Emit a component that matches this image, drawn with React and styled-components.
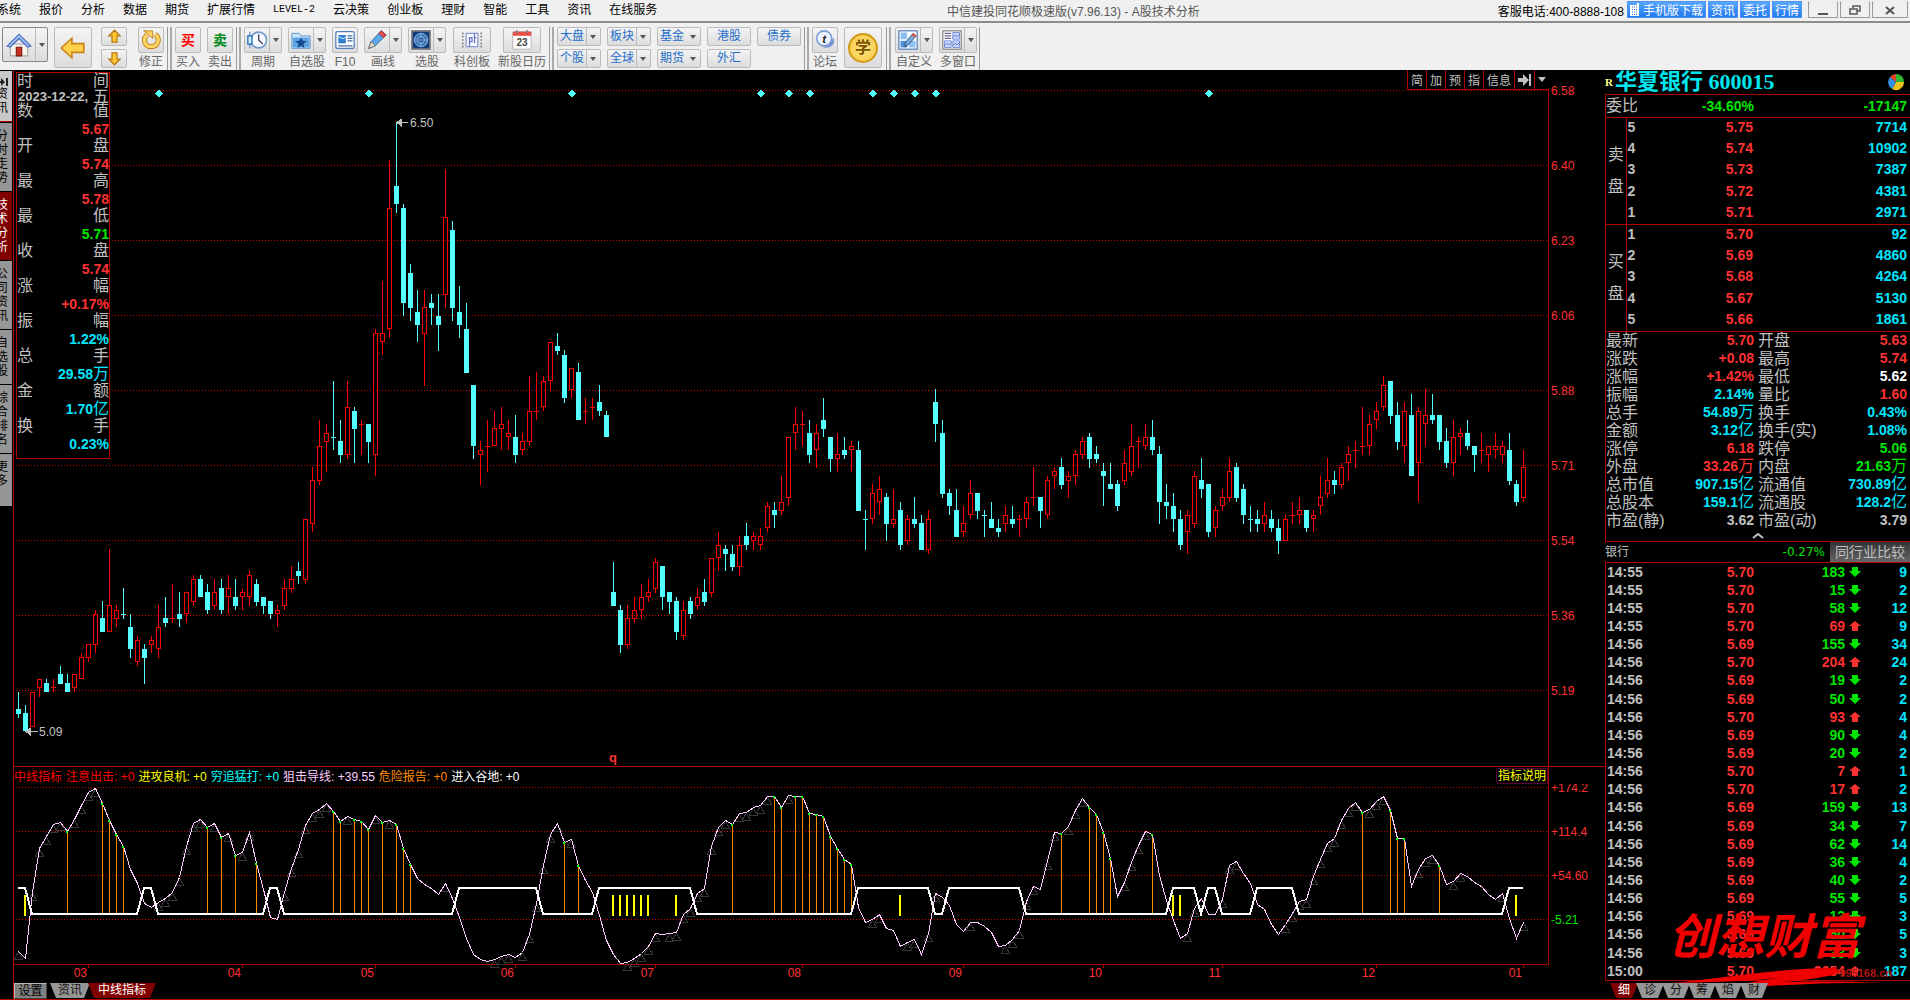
import React from 'react';
import styled, { createGlobalStyle } from 'styled-components';

const RED = '#b00000';

/* high, body top, body bottom, low (in cents), r = rising, c = falling */
const CANDLES = `
518 514 513 512 c|515 513 509 509 c|518 518 510 510 r|521 521 519 517 r|521 520 518 518 c|521 519 519 518 r|524 522 520 520 c|522 520 518 518 c|522 522 519 518 r|527 526 521 521 r
529 529 526 525 r|537 536 529 527 r|539 535 532 532 c|551 538 532 532 r|538 537 535 533 r|542 536 536 535 c|536 533 528 526 c|531 530 525 524 r|529 528 526 520 c|531 530 529 527 r
538 533 528 526 r|540 535 534 533 c|543 535 535 534 r|541 536 535 533 c|541 541 536 534 r|545 544 539 538 r|545 544 540 540 c|543 541 537 536 c|544 541 538 537 r|544 542 537 536 c
545 542 540 536 r|544 540 538 537 c|542 541 540 537 r|546 545 540 538 r|544 543 539 538 c|540 540 538 536 c|539 539 536 535 c|538 537 536 533 r|544 542 538 537 r|547 544 542 541 r
548 546 545 543 c|558 558 544 543 r|570 567 557 555 r|581 575 567 566 r|580 578 576 569 r|590 577 577 574 c|581 576 573 571 c|590 584 573 572 r|584 583 579 571 c|581 580 580 573 r
580 580 576 571 c|602 601 573 568 r|613 601 599 596 r|641 630 602 600 r|650 635 631 629 c|631 630 608 605 c|617 615 607 604 c|611 606 603 599 c|611 607 601 589 r|610 608 607 603 c
610 605 603 597 c|639 628 610 607 r|627 625 607 604 c|612 606 603 600 c|608 602 592 592 c|589 589 575 572 c|576 574 573 566 r|581 575 575 569 r|583 579 575 575 r|584 580 579 574 r
581 578 577 574 r|582 577 573 571 c|578 576 574 573 r|591 583 576 575 r|592 583 583 581 r|591 590 584 583 r|599 599 590 588 r|601 598 597 596 c|597 596 586 585 c|593 593 588 586 r
594 592 581 581 c|586 583 583 580 r|586 584 584 581 r|589 585 583 582 c|583 582 577 577 c|548 541 538 538 c|538 537 529 527 c|538 535 529 528 r|540 537 535 534 r|543 540 537 535 r
544 541 540 539 r|549 548 542 541 r|547 547 540 537 c|541 541 539 536 c|540 539 532 530 c|539 537 531 530 r|540 539 536 535 c|542 540 538 537 r|544 541 539 538 c|549 549 541 540 r
555 552 549 546 r|552 551 550 546 c|552 550 547 546 c|554 552 547 545 r|557 554 552 551 c|555 554 553 551 r|556 554 552 551 r|562 561 556 555 r|562 560 559 556 c|568 562 560 559 r
577 577 563 561 r|584 580 578 574 r|583 580 580 575 r|581 578 573 571 c|580 578 574 570 r|586 581 579 577 c|577 577 572 569 c|578 573 572 569 r|577 574 573 572 c|576 575 574 569 r
576 574 560 560 c|560 558 558 551 c|566 564 558 557 r|568 565 562 559 r|564 563 557 553 c|565 558 557 556 r|562 560 552 551 c|559 558 553 552 r|563 558 557 556 c|559 557 551 551 c
560 558 551 550 r|588 585 580 576 c|581 578 564 563 c|565 564 561 559 c|565 560 554 554 c|561 557 555 554 r|567 564 559 558 r|564 564 560 558 c|560 559 559 554 c|562 558 556 556 c
558 556 555 554 c|561 559 557 555 r|561 558 557 556 c|559 558 558 554 r|563 562 558 556 r|570 563 563 561 r|563 563 560 556 c|568 567 559 558 r|570 569 568 565 r|572 570 566 565 c
569 568 567 563 r|574 573 568 566 r|577 576 573 572 r|578 577 572 570 c|575 573 572 571 c|571 569 568 561 c|571 566 565 565 c|567 566 561 560 c|574 571 567 566 r|580 575 569 568 r
577 576 576 570 r|580 577 575 574 r|581 577 574 573 c|575 573 562 557 c|566 562 561 558 c|564 561 558 555 c|560 558 552 551 c|560 559 555 550 r|569 568 557 556 r|572 567 565 563 c
566 566 555 554 c|561 560 556 554 r|565 563 561 560 r|572 569 563 562 r|571 570 563 562 c|566 565 559 557 c|561 558 558 555 c|560 558 557 555 c|562 559 557 555 r|560 558 556 555 c
558 556 553 550 c|559 558 553 553 r|562 559 559 557 r|563 560 559 557 r|560 560 556 555 c|560 559 558 555 r|568 563 561 559 r|572 567 564 563 r|569 567 566 564 c|571 570 566 565 r
575 573 571 567 r|576 574 574 570 r|584 575 575 573 r|582 580 575 573 r|585 583 581 579 r|591 589 584 583 r|590 590 582 580 c|585 582 576 574 c|585 583 575 571 r|587 582 568 568 c
584 583 571 562 r|588 582 580 575 r|587 582 581 580 c|582 582 576 574 c|579 576 571 570 c|581 577 571 568 r|579 578 577 573 r|581 578 575 574 c|575 575 573 569 c|578 574 574 571 r
575 575 573 569 r|578 575 574 572 r|576 575 573 571 r|578 574 567 566 c|567 566 562 561 c|574 570 563 562 r`
  .trim()
  .split(/[|\n]/)
  .map((row) => {
    const [high, top, bottom, low, kind] = row.split(' ');
    return { high: +high, top: +top, bottom: +bottom, low: +low, up: kind === 'r' };
  });

const OSCILLATOR = [
  211, 218, 152, 108, 96, 84, 82, 91, 79, 65, 52, 48, 63, 80, 94, 106, 129, 143, 163, 167,
  162, 158, 152, 137, 106, 83, 79, 87, 83, 97, 93, 115, 112, 92, 123, 149, 177, 179, 152, 128,
  109, 85, 73, 69, 63, 71, 81, 76, 79, 81, 89, 75, 82, 80, 84, 108, 124, 138, 144, 148,
  154, 143, 158, 177, 198, 214, 219, 221, 219, 216, 214, 217, 212, 194, 163, 125, 94, 83, 102, 99,
  125, 140, 152, 175, 200, 214, 223, 222, 218, 213, 206, 193, 194, 193, 192, 174, 168, 153, 148, 106,
  87, 80, 84, 73, 72, 67, 65, 56, 56, 67, 55, 56, 56, 73, 74, 76, 96, 108, 119, 124,
  167, 182, 179, 174, 188, 190, 206, 202, 199, 214, 193, 153, 157, 165, 184, 191, 182, 182, 186, 192,
  206, 205, 199, 190, 161, 146, 149, 121, 92, 93, 86, 70, 58, 67, 74, 92, 118, 156, 142, 122,
  105, 91, 94, 135, 160, 180, 198, 193, 168, 158, 174, 174, 159, 125, 121, 133, 143, 164, 169, 184,
  194, 184, 173, 161, 159, 136, 119, 103, 98, 80, 68, 62, 72, 69, 61, 56, 70, 98, 98, 146,
  129, 118, 115, 125, 144, 141, 133, 136, 142, 146, 154, 159, 153, 178, 198, 182,
].map((v) => v + 740);

const HIGH_RUNS = [[0, 1], [18, 19], [36, 37], [63, 74], [83, 96], [120, 130], [133, 143], [165, 168], [170, 171], [177, 182], [213, 215]];
const SIGNALS = [1, 85, 86, 87, 88, 89, 90, 94, 126, 165, 166, 214];
const EVENTS = [20, 50, 79, 106, 110, 113, 122, 125, 128, 131, 170];
const PRICE_GRID = [['6.58', 90], ['6.40', 165], ['6.23', 240], ['6.06', 315], ['5.88', 390], ['5.71', 465], ['5.54', 540], ['5.36', 615], ['5.19', 690]];
const LEVEL_GRID = [['+174.2', 787], ['+114.4', 831], ['+54.60', 875], ['-5.21', 919]];
const MONTHS = [['03', 10], ['04', 32], ['05', 51], ['06', 71], ['07', 91], ['08', 112], ['09', 135], ['10', 155], ['11', 172], ['12', 194], ['01', 215]];

const MENU = ['系统', '报价', '分析', '数据', '期货', '扩展行情', 'LEVEL-2', '云决策', '创业板', '理财', '智能', '工具', '资讯', '在线服务'];
const SIDE_TABS = ['资讯', '分时走势', '技术分析', '公司资讯', '自选股', '综合排名', '更多'];

const CURSOR_DATA = [
  ['数值', '5.67', 'red'],
  ['开盘', '5.74', 'red'],
  ['最高', '5.78', 'red'],
  ['最低', '5.71', 'green'],
  ['收盘', '5.74', 'red'],
  ['涨幅', '+0.17%', 'red'],
  ['振幅', '1.22%', 'cyan'],
  ['总手', '29.58万', 'cyan'],
  ['金额', '1.70亿', 'cyan'],
  ['换手', '0.23%', 'cyan'],
];

const ASKS = [[5, '5.75', 7714], [4, '5.74', 10902], [3, '5.73', 7387], [2, '5.72', 4381], [1, '5.71', 2971]];
const BIDS = [[1, '5.70', 92], [2, '5.69', 4860], [3, '5.68', 4264], [4, '5.67', 5130], [5, '5.66', 1861]];

const STATS = [
  ['最新', '5.70', 'red', '开盘', '5.63', 'red'],
  ['涨跌', '+0.08', 'red', '最高', '5.74', 'red'],
  ['涨幅', '+1.42%', 'red', '最低', '5.62', 'white'],
  ['振幅', '2.14%', 'cyan', '量比', '1.60', 'red'],
  ['总手', '54.89万', 'cyan', '换手', '0.43%', 'cyan'],
  ['金额', '3.12亿', 'cyan', '换手(实)', '1.08%', 'cyan'],
  ['涨停', '6.18', 'red', '跌停', '5.06', 'green'],
  ['外盘', '33.26万', 'red', '内盘', '21.63万', 'green'],
  ['总市值', '907.15亿', 'cyan', '流通值', '730.89亿', 'cyan'],
  ['总股本', '159.1亿', 'cyan', '流通股', '128.2亿', 'cyan'],
  ['市盈(静)', '3.62', 'grey', '市盈(动)', '3.79', 'grey'],
];

const TICKS = [
  ['14:55', '5.70', 183, 'd', 9],
  ['14:55', '5.70', 15, 'd', 2],
  ['14:55', '5.70', 58, 'd', 12],
  ['14:55', '5.70', 69, 'u', 9],
  ['14:56', '5.69', 155, 'd', 34],
  ['14:56', '5.70', 204, 'u', 24],
  ['14:56', '5.69', 19, 'd', 2],
  ['14:56', '5.69', 50, 'd', 2],
  ['14:56', '5.70', 93, 'u', 4],
  ['14:56', '5.69', 90, 'd', 4],
  ['14:56', '5.69', 20, 'd', 2],
  ['14:56', '5.70', 7, 'u', 1],
  ['14:56', '5.70', 17, 'u', 2],
  ['14:56', '5.69', 159, 'd', 13],
  ['14:56', '5.69', 34, 'd', 7],
  ['14:56', '5.69', 62, 'd', 14],
  ['14:56', '5.69', 36, 'd', 4],
  ['14:56', '5.69', 40, 'd', 2],
  ['14:56', '5.69', 55, 'd', 5],
  ['14:56', '5.69', 12, 'd', 3],
  ['14:56', '5.69', 50, 'd', 5],
  ['14:56', '5.69', 33, 'd', 3],
  ['15:00', '5.70', 3054, 'u', 187],
];

const TONES = { red: '#ff3232', green: '#00e600', cyan: '#00e6ff', white: '#ffffff', grey: '#c0c0c0' };

const xOf = (i) => 18 + 7 * i;
const yOf = (p) => 122 + (650 - p) * 4.32;

const Candle = ({ data, x }) => {
  const color = data.up ? '#ff0000' : '#54ffff';
  const high = Math.floor(yOf(data.high));
  const top = Math.floor(yOf(data.top));
  const bottom = Math.max(Math.round(yOf(data.bottom)), top + 1);
  const low = Math.max(Math.round(yOf(data.low)), bottom);
  return (
    <g fill={color}>
      <rect x={x} y={high} width="1" height={top - high} />
      <rect x={x} y={bottom} width="1" height={low - bottom} />
      {data.up && bottom - top > 2 ? (
        <rect x={x - 1.5} y={top + 0.5} width="4" height={bottom - top - 1} fill="none" stroke={color} />
      ) : (
        <rect x={x - 2} y={top} width="5" height={bottom - top} />
      )}
    </g>
  );
};

const PriceChart = () => (
  <ChartSvg viewBox="14 70 1591 696" role="img" aria-label="K线">
    {PRICE_GRID.map(([label, y]) => (
      <g key={label}>
        <line x1="16" x2="1548" y1={y + 0.5} y2={y + 0.5} stroke="#c80000" strokeDasharray="1 2" />
        <text x="1551" y={y + 5} fill="#ff3232">{label}</text>
      </g>
    ))}
    <rect x="1548" y="70" width="1" height="696" fill={RED} />
    {EVENTS.map((i) => (
      <path key={i} d={`M${xOf(i) + 1} 89.500l4 4-4 4-4-4z`} fill="#54ffff" />
    ))}
    {CANDLES.map((c, i) => (
      <Candle key={i} data={c} x={xOf(i)} />
    ))}
    <path d="M397 122.500h11M397 122.500l4-3v6z" stroke="#c0c0c0" fill="#c0c0c0" />
    <text x="410" y="127" fill="#c0c0c0">6.50</text>
    <path d="M26 731.500h12M26 731.500l4-3v6z" stroke="#c0c0c0" fill="#c0c0c0" />
    <text x="39" y="736" fill="#c0c0c0">5.09</text>
    <text x="609" y="762" fill="#ff3232" fontWeight="bold" fontSize="13">q</text>
  </ChartSvg>
);

const boxPath = () => {
  const isHigh = (i) => HIGH_RUNS.some(([a, b]) => i >= a && i <= b);
  return OSCILLATOR.map((_, i) => `${i ? 'L' : 'M'}${xOf(i)} ${isHigh(i) ? 888 : 914}`).join('');
};

const IndicatorChart = () => (
  <ChartSvg viewBox="14 784 1591 197" role="img" aria-label="中线指标">
    {LEVEL_GRID.map(([label, y]) => (
      <g key={label}>
        <line x1="16" x2="1548" y1={y + 0.5} y2={y + 0.5} stroke="#c80000" strokeDasharray="1 2" />
        <text x="1551" y={y + 5} fill={label[0] === '-' ? '#00e600' : '#ff3232'}>{label}</text>
      </g>
    ))}
    <rect x="1548" y="784" width="1" height="181" fill={RED} />
    <rect x="13" y="964" width="1536" height="1" fill={RED} />
    {OSCILLATOR.map((y, i) => {
      const x = xOf(i);
      const falling = i > 0 && y >= OSCILLATOR[i - 1];
      if (!falling) return <path key={i} d={`M${x + 0.5} ${y + 1}l4 7h-8z`} fill="none" stroke="#383838" />;
      if (y > 866) return null;
      return <rect key={i} x={x} y={y} width="1" height={913 - y} fill="#ff8c00" />;
    })}
    <path d={OSCILLATOR.map((y, i) => `${i ? 'L' : 'M'}${xOf(i) + 0.5} ${y + 0.5}`).join('')} fill="none" stroke="#ffccff" />
    {OSCILLATOR.map((y, i) =>
      i > 0 && y >= OSCILLATOR[i - 1] && y <= 866 ? <rect key={i} x={xOf(i) - 1} y={y} width="2" height="2" fill="#00ff00" /> : null
    )}
    {SIGNALS.map((i) => (
      <rect key={i} x={xOf(i) - 1} y="895" width="2" height="21" fill="#ffff00" />
    ))}
    <path d={boxPath()} fill="none" stroke="#ffffff" strokeWidth="2" />
    {MONTHS.map(([label, i]) => (
      <g key={label}>
        <rect x={xOf(i)} y="965" width="1" height="3" fill={RED} />
        <text x={xOf(i) - 1} y="977" fill="#ff3232" textAnchor="end">{label}</text>
      </g>
    ))}
  </ChartSvg>
);

const Arrow = ({ up }) => (
  <svg width="12" height="12" viewBox="0 0 12 12" fill={up ? TONES.red : TONES.green} aria-hidden="true">
    {up ? <path d="M6 1l6 5H9v5H3V6H0z" /> : <path d="M3 1h6v4h3l-6 6-6-6h3z" />}
  </svg>
);

/* the number stays bold, the 万 / 亿 unit after it does not */
const Amount = ({ value }) => {
  const text = String(value);
  const unit = text.slice(-1);
  if (unit !== '万' && unit !== '亿') return text;
  return <>{text.slice(0, -1)}<Unit>{unit}</Unit></>;
};

const ICONS = {
  home: (
    <>
      <path d="M4 11h16v11H4z" fill="#f6f2ec" stroke="#aaa" />
      <path d="M9.500 14h5v8h-5z" fill="#c8321e" stroke="#7c1c10" />
      <path d="M1 13L12 2l11 11-3 1-8-8-8 8z" fill="#9dbcf5" stroke="#4468b8" />
    </>
  ),
  back: <path d="M1 12L11 3v5h11v8H11v5z" fill="#ffd24a" stroke="#c88416" strokeWidth="1.500" />,
  up: <path d="M12 2l9 9h-5v10H8V11H3z" fill="#ffc62e" stroke="#b87818" strokeWidth="2" />,
  down: <path d="M12 22l-9-9h5V3h8v10h5z" fill="#ffc62e" stroke="#b87818" strokeWidth="2" />,
  fix: (
    <>
      <path d="M7 6C2 11 4 20 12 20s12-9 5-15" fill="none" stroke="#b87818" strokeWidth="6" />
      <path d="M7 6C2 11 4 20 12 20s12-9 5-15" fill="none" stroke="#ffd463" strokeWidth="4" />
      <path d="M3 1h11v9z" fill="#ffd463" stroke="#b87818" />
    </>
  ),
  clock: (
    <>
      <circle cx="14" cy="12" r="9.500" fill="#f8fbff" stroke="#6f9ac8" strokeWidth="2" />
      <path d="M14 5v7l5 5" fill="none" stroke="#335" strokeWidth="1.500" />
      <path d="M3.500 2v20" stroke="#176bb5" />
      <path d="M1 7h5v10H1z" fill="#d6efff" stroke="#176bb5" strokeWidth="1.500" />
    </>
  ),
  folder: (
    <>
      <path d="M1 4h9l2 3h11v15H1z" fill="#c9e3fa" stroke="#5a8dc0" />
      <path d="M2 9h20v12H2z" fill="#5fa4e4" />
      <path d="M12 9l2 4 5 .5-4 3 1 5-4-2.500-4 2.500 1-5-4-3 5-.5z" fill="#174a8c" />
    </>
  ),
  doc: (
    <>
      <rect x="1" y="2" width="22" height="20" rx="2" fill="#fff" stroke="#4f7eb8" strokeWidth="1.500" />
      <rect x="4" y="6" width="9" height="10" fill="#2e7fd0" />
      <path d="M4 7q4 5 9 2" stroke="#fff" fill="none" />
      <path d="M15 7h6M15 10h6M15 13h6M4 19h17" stroke="#456da8" strokeWidth="1.500" />
    </>
  ),
  pencil: (
    <>
      <path d="M2 22l3-8L17 1l6 5L10 19z" fill="#5da9e8" stroke="#285c96" />
      <path d="M17 1l6 5-3 3-6-5z" fill="#e85050" stroke="#9c2828" />
      <path d="M2 22l3-8 5 5z" fill="#f5e5c8" stroke="#666" />
    </>
  ),
  radar: (
    <>
      <rect x="1" y="1" width="22" height="22" fill="#143c78" stroke="#888" strokeWidth="2" />
      <circle cx="12" cy="12" r="8" fill="#3d76b8" stroke="#9fc6ef" />
      <circle cx="12" cy="12" r="4" fill="#1e4c8a" stroke="#9fc6ef" />
      <path d="M12 4v16M4 12h16" stroke="#9fc6ef" strokeWidth=".7" />
    </>
  ),
  chip: (
    <>
      <rect x="5" y="4" width="14" height="16" fill="#f8f8ff" stroke="#8c9ad0" strokeWidth="1.500" />
      <path d="M9 20V9h3v5H9M15 4v12M15 9h2" fill="none" stroke="#6577c4" strokeWidth="1.500" />
      <path d="M1 3v18M23 3v18" stroke="#888" strokeDasharray="2 2" strokeWidth="2" />
    </>
  ),
  calendar: (
    <>
      <rect x="1" y="2" width="22" height="21" rx="1" fill="#fff" stroke="#aaa" />
      <path d="M1 2h22v5H1z" fill="#e8504a" />
      <path d="M6 0v4M18 0v4" stroke="#888" strokeWidth="2" />
      <text x="12" y="19" textAnchor="middle" fontSize="12" fill="#444">23</text>
    </>
  ),
  chat: (
    <>
      <path d="M8 20c8 4 18-1 14-11l-5 9z" fill="#7797d2" />
      <circle cx="11" cy="10" r="9" fill="#eef4ff" stroke="#7d9ed8" strokeWidth="2" />
      <text x="11" y="15" textAnchor="middle" fontSize="14" fontWeight="bold" fontStyle="italic" fill="#222">t</text>
    </>
  ),
  custom: (
    <>
      <rect x="1" y="1" width="22" height="22" fill="#fff" stroke="#5580b8" strokeWidth="1.500" />
      <path d="M3 3h8v8H3zM13 13h8v8h-8z" fill="#8fc0f0" />
      <path d="M3 13h8v8H3z" fill="#4c8fd8" />
      <path d="M8 20l1-5L18 4l4 3-10 11z" fill="#6faee6" stroke="#345" />
      <path d="M18 4l4 3-2 2-4-3z" fill="#e85050" />
    </>
  ),
  windows: (
    <>
      <rect x="1" y="1" width="22" height="22" fill="#fff" stroke="#888" strokeWidth="1.500" />
      <path d="M13 3h8v8h-8zM3 13h8v8H3zM13 13h8v8h-8z" fill="#cddcff" stroke="#6a7fd0" />
      <path d="M3 4h8M3 7h8M3 10h8" stroke="#6a6a90" strokeWidth="1.500" />
      <path d="M13 9l3-3 2 2 3-3M3 19l3-3 2 2 3-3M13 19l3-3 2 2 3-3" fill="none" stroke="#3c55b8" />
    </>
  ),
};

const Icon = ({ name, size = 20 }) => (
  <svg width={size} height={size} viewBox="0 0 24 24" aria-hidden="true">{ICONS[name]}</svg>
);

const Tool = ({ icon, glyph, tone, label, drop, minWidth }) => (
  <ToolItem $minWidth={minWidth}>
    <ToolButton $wide={drop || minWidth} aria-label={label}>
      <ToolFace $tone={tone}>{glyph || <Icon name={icon} />}</ToolFace>
      {drop && <Drop />}
    </ToolButton>
    <span>{label}</span>
  </ToolItem>
);

const Toolbar = () => (
  <ToolStrip>
    <HomeButton aria-label="首页">
      <ToolFace><Icon name="home" size={26} /></ToolFace>
      <Drop />
    </HomeButton>
    <BigButton aria-label="后退"><Icon name="back" size={26} /></BigButton>
    <ArrowStack>
      <SmallButton aria-label="上移"><Icon name="up" size={15} /></SmallButton>
      <SmallButton aria-label="下移"><Icon name="down" size={15} /></SmallButton>
    </ArrowStack>
    <Tool icon="fix" label="修正" />
    <Divider />
    <ToolGroup>
      <Tool glyph="买" tone="#f00" label="买入" />
      <Tool glyph="卖" tone="#008c1e" label="卖出" />
    </ToolGroup>
    <Divider />
    <ToolGroup>
      <Tool icon="clock" label="周期" drop />
      <Tool icon="folder" label="自选股" drop />
      <Tool icon="doc" label="F10" />
      <Tool icon="pencil" label="画线" drop />
      <Tool icon="radar" label="选股" drop />
      <Tool icon="chip" label="科创板" minWidth="40px" />
      <Tool icon="calendar" label="新股日历" minWidth="48px" />
    </ToolGroup>
    <Divider />
    <MarketGrid>
      {['大盘', '板块', '基金', '港股', '债券', '个股', '全球', '期货', '外汇'].map((name) => (
        <MarketButton key={name}>
          {name}
          {!['港股', '债券', '外汇'].includes(name) && <Drop $bare={name === '基金' || name === '期货'} />}
        </MarketButton>
      ))}
    </MarketGrid>
    <Divider />
    <ToolGroup>
      <Tool icon="chat" label="论坛" />
      <BigButton><Coin>学</Coin></BigButton>
    </ToolGroup>
    <Divider $spaced />
    <ToolGroup>
      <Tool icon="custom" label="自定义" drop />
      <Tool icon="windows" label="多窗口" drop />
    </ToolGroup>
    <EndLine />
  </ToolStrip>
);

const OrderTable = ({ side, rows }) => (
  <BookTable>
    <colgroup>
      <col width="20" /><col width="20" /><col width="109" /><col />
    </colgroup>
    <tbody>
      {rows.map(([level, price, volume], i) => (
        <tr key={level}>
          {i === 0 && <SideCell rowSpan={5}><span>{side}</span><span>盘</span></SideCell>}
          <NumCell $tone="grey" $left>{level}</NumCell>
          <NumCell $tone="red">{price}</NumCell>
          <NumCell $tone="cyan">{volume}</NumCell>
        </tr>
      ))}
    </tbody>
  </BookTable>
);

const QuotePanel = () => (
  <Panel>
    <StockTitle>
      <small>R</small>
      <h1>华夏银行 600015</h1>
      <svg width="18" height="18" viewBox="0 0 18 18" aria-hidden="true">
        <path d="M9 9V1a8 8 0 0 1 8 8z" fill="#2fb62f" />
        <path d="M9 9h8a8 8 0 0 1-12 7z" fill="#f2c21c" />
        <path d="M9 9l-4 7a8 8 0 0 1-2-12z" fill="#2f8fe0" />
        <path d="M9 9L3 4a8 8 0 0 1 6-3z" fill="#e0452a" />
      </svg>
    </StockTitle>
    <Boxed>
      <RatioRow>
        <span>委比</span><b>-34.60%</b><b>-17147</b>
      </RatioRow>
      <OrderTable side="卖" rows={ASKS} />
      <OrderTable side="买" rows={BIDS} />
      <StatsTable>
        <colgroup>
          <col width="66" /><col width="84" /><col width="72" /><col />
        </colgroup>
        <tbody>
          {STATS.map(([a, av, at, b, bv, bt]) => (
            <tr key={a}>
              <LabelCell>{a}</LabelCell>
              <NumCell $tone={at}><Amount value={av} /></NumCell>
              <LabelCell $indent>{b}</LabelCell>
              <NumCell $tone={bt}><Amount value={bv} /></NumCell>
            </tr>
          ))}
        </tbody>
      </StatsTable>
      <Collapse aria-label="收起">
        <svg width="12" height="7" viewBox="0 0 12 7" aria-hidden="true">
          <path d="M1 6l5-4 5 4" fill="none" stroke="#c0c0c0" strokeWidth="2" />
        </svg>
      </Collapse>
    </Boxed>
    <IndustryRow>
      <span>银行</span>
      <em>-0.27%</em>
      <button>同行业比较</button>
    </IndustryRow>
    <TickBox>
      <TickTable>
        <colgroup>
          <col width="60" /><col width="90" /><col width="91" /><col width="18" /><col />
        </colgroup>
        <tbody>
          {TICKS.map(([time, price, vol, dir, n], i) => (
            <tr key={i}>
              <NumCell $tone="grey" $left>{time}</NumCell>
              <NumCell $tone="red">{price}</NumCell>
              <NumCell $tone={dir === 'u' ? 'red' : 'green'}>{vol}</NumCell>
              <ArrowCell><Arrow up={dir === 'u'} /></ArrowCell>
              <NumCell $tone="cyan">{n}</NumCell>
            </tr>
          ))}
        </tbody>
      </TickTable>
      <Brand>
        <strong>创想财富</strong>
        <svg viewBox="0 0 216 22" aria-hidden="true">
          <path d="M5 17C60 12 110 2 168 2l4 5q-50 3-82 7-30 2-85 3z" fill="#f00000" />
          <path d="M80 17q40-8 92-14l-6 6q-32 6-52 7 50-2 102 1-64-1-130 4-6 0-6-4z" fill="#f00000" />
        </svg>
        <span>995168.cn</span>
      </Brand>
    </TickBox>
    <PanelTabs>
      {['细', '诊', '分', '筹', '焰', '财'].map((t, i) => (
        <SlantTab key={t} $active={i === 0}>{t}</SlantTab>
      ))}
    </PanelTabs>
  </Panel>
);

const App = () => (
  <>
    <GlobalStyle />
    <Page>
      <MenuBar>
        <MenuItems>
          {MENU.map((m) => (
            <MenuButton key={m} $latin={m === 'LEVEL-2'}>{m}</MenuButton>
          ))}
        </MenuItems>
        <WindowTitle>中信建投同花顺极速版(v7.96.13) - A股技术分析</WindowTitle>
        <Phone>客服电话:400-8888-108</Phone>
        <LinkGroup>
          <BlueLink href="#app">
            <svg width="10" height="13" viewBox="0 0 10 13" aria-hidden="true">
              <path d="M0 2h7V0h2v13H0z" fill="#fff" />
              <path d="M2 4h5M2 6.500h5M2 9h5M2 11.500h5" stroke="#2e6fd0" strokeDasharray="1 1" />
            </svg>
            手机版下载
          </BlueLink>
          <BlueLink href="#news">资讯</BlueLink>
          <BlueLink href="#trade">委托</BlueLink>
          <BlueLink href="#quote">行情</BlueLink>
        </LinkGroup>
        <WindowButtons>
          <button aria-label="最小化">
            <svg width="12" height="12" viewBox="0 0 12 12"><path d="M1 9h10v2H1z" fill="#555" /></svg>
          </button>
          <button aria-label="还原">
            <svg width="12" height="12" viewBox="0 0 12 12"><path d="M4 4V2h7v5H8M1 5h7v5H1z" fill="none" stroke="#555" strokeWidth="1.500" /></svg>
          </button>
          <button aria-label="关闭">
            <svg width="12" height="12" viewBox="0 0 12 12"><path d="M2 3l8 7M10 3l-8 7" stroke="#555" strokeWidth="2" /></svg>
          </button>
        </WindowButtons>
      </MenuBar>
      <Toolbar />
      <Main>
        <SideNav>
          {SIDE_TABS.map((t, i) => (
            <SideTab key={t} $kind={i === 0 ? 'light' : i === 2 ? 'active' : 'plain'} aria-label={t}>
              {i === 0 && (
                <svg width="10" height="10" viewBox="0 0 10 10" aria-hidden="true">
                  <path d="M0 4h3V1l4 4-4 4V6H0zM8 1h2v8H8z" fill="#222" />
                </svg>
              )}
              {t.split('').map((ch) => <span key={ch}>{ch}</span>)}
            </SideTab>
          ))}
        </SideNav>
        <ChartColumn>
          <PricePane>
            <PriceChart />
            <CursorBox>
              <Spread><span>时</span><span>间</span></Spread>
              <CursorDate>2023-12-22,<Unit>五</Unit></CursorDate>
              {CURSOR_DATA.map(([label, value, tone]) => (
                <React.Fragment key={label}>
                  <Spread><span>{label[0]}</span><span>{label[1]}</span></Spread>
                  <CursorValue $tone={tone}><Amount value={value} /></CursorValue>
                </React.Fragment>
              ))}
            </CursorBox>
            <ChartTools>
              {['简', '加', '预', '指', '信息'].map((t) => <button key={t}>{t}</button>)}
              <button aria-label="移至最右">
                <svg width="13" height="12" viewBox="0 0 13 12"><path d="M0 4h5V0l6 6-6 6V8H0zM11 0h2v12h-2z" fill="#c0c0c0" /></svg>
              </button>
              <button aria-label="更多">
                <svg width="8" height="5" viewBox="0 0 8 5"><path d="M0 0h8L4 5z" fill="#c0c0c0" /></svg>
              </button>
            </ChartTools>
          </PricePane>
          <IndicatorHead>
            <Legend $color="#ff0000">中线指标</Legend>
            <Legend $color="#ff0000">注意出击: +0</Legend>
            <Legend $color="#ffff00">进攻良机: +0</Legend>
            <Legend $color="#00ffff">穷追猛打: +0</Legend>
            <Legend $color="#ffccff">狙击导线: +39.55</Legend>
            <Legend $color="#ff8c00">危险报告: +0</Legend>
            <Legend $color="#ffffff">进入谷地: +0</Legend>
            <HelpArea><button>指标说明</button></HelpArea>
          </IndicatorHead>
          <IndicatorChart />
          <BottomTabs>
            <SettingButton>设置</SettingButton>
            <SlantTab $size="40px">资讯</SlantTab>
            <SlantTab $size="68px" $active>中线指标</SlantTab>
          </BottomTabs>
        </ChartColumn>
        <QuotePanel />
      </Main>
    </Page>
  </>
);

export default App;

const GlobalStyle = createGlobalStyle`
  * { box-sizing: border-box; }
  body {
    margin: 0;
    background: #000;
    font-family: "Liberation Sans", "Noto Sans CJK SC", sans-serif;
    font-size: 12px;
    overflow-x: hidden;
  }
  button {
    font: inherit;
    color: inherit;
    padding: 0;
    margin: 0;
    border: 0;
    background: none;
  }
  svg { display: block; flex: none; }
`;

const Page = styled.div`
  display: flex;
  flex-direction: column;
  min-height: 100vh;
`;

const MenuBar = styled.header`
  display: flex;
  align-items: center;
  height: 23px;
  padding-bottom: 2px;
  background: #f0f0f0;
  border-bottom: 2px solid #8c8c8c;
  white-space: nowrap;
  overflow: hidden;
`;

const MenuItems = styled.nav`
  display: flex;
  gap: 18px;
  margin-left: -3px;
  width: 950px;
`;

const MenuButton = styled.button`
  line-height: 18px;
  ${(props) => props.$latin && 'font-family: "Liberation Mono", monospace; font-size: 10px;'}
`;

const WindowTitle = styled.div`
  flex: 1;
  padding-top: 2px;
  color: #555;
`;

const Phone = styled.div`
  margin-right: 3px;
  padding-top: 2px;
`;

const LinkGroup = styled.div`
  display: flex;
  gap: 2px;
`;

const BlueLink = styled.a`
  display: flex;
  align-items: center;
  gap: 3px;
  height: 17px;
  padding: 0 2px;
  background: linear-gradient(#5aa8ff, #1e78f0);
  border: 1px solid #4c94f0;
  color: #fff;
  text-decoration: none;
`;

const WindowButtons = styled.div`
  display: flex;
  gap: 2px;
  margin: 0 2px 0 6px;

  button {
    display: flex;
    align-items: center;
    justify-content: center;
    width: 30px;
    height: 17px;
    border: 1px solid #999;
    border-top-color: #eee;
  }
  button:last-child {
    width: 36px;
  }
`;

const ToolStrip = styled.div`
  display: flex;
  align-items: flex-start;
  height: 47px;
  padding: 4px 0 0 2px;
  background: #f0f0f0;
  color: #666;
`;

const ToolGroup = styled.div`
  display: flex;
  gap: 6px;
`;

const Button = styled.button`
  display: flex;
  align-items: center;
  justify-content: center;
  background: linear-gradient(#f4f4f4, #dcdcdc);
  border: 1px solid #bbb;
  border-radius: 2px;
`;

const HomeButton = styled(Button)`
  width: 46px;
  height: 35px;
  border-color: #888;
  margin-right: 6px;
`;

const BigButton = styled(Button)`
  width: 38px;
  height: 41px;
`;

const ArrowStack = styled.div`
  display: flex;
  flex-direction: column;
  gap: 3px;
  margin: 0 11px 0 9px;
`;

const SmallButton = styled(Button)`
  width: 26px;
  height: 19px;
`;

const ToolItem = styled.div`
  display: flex;
  flex-direction: column;
  align-items: center;
  min-width: ${(props) => props.$minWidth || '0'};
  line-height: 18px;
  white-space: nowrap;
`;

const ToolButton = styled(Button)`
  width: ${(props) => (props.$wide ? '38px' : '26px')};
  height: 26px;
`;

const ToolFace = styled.span`
  display: flex;
  flex: 1;
  align-items: center;
  justify-content: center;
  color: ${(props) => props.$tone || 'inherit'};
  font-size: 14px;
  font-weight: bold;
`;

const Drop = styled.span`
  display: flex;
  align-items: center;
  justify-content: center;
  align-self: stretch;
  width: 12px;
  border-left: 1px solid ${(props) => (props.$bare ? 'transparent' : '#bbb')};

  &::after {
    content: '';
    border: 3px solid transparent;
    border-top: 4px solid #555;
    border-bottom: 0;
  }
`;

const Divider = styled.span`
  align-self: stretch;
  width: 5px;
  margin: 0 ${(props) => (props.$spaced ? '4px' : '3px')};
  border-left: 1px solid #999;
  border-right: 2px solid #aaa;
`;

const EndLine = styled.span`
  align-self: stretch;
  width: 3px;
  border-right: 1px solid #999;
`;

const MarketGrid = styled.div`
  display: grid;
  grid-template-columns: repeat(5, 44px);
  gap: 3px 6px;
`;

const MarketButton = styled(Button)`
  height: 19px;
  color: #1e6ec8;
  gap: 2px;
  line-height: 17px;
`;

const Coin = styled.span`
  width: 30px;
  height: 30px;
  border: 2px solid #d09a18;
  border-radius: 50%;
  background: radial-gradient(#ffe88a, #f6c63c);
  color: #7a5200;
  font-size: 16px;
  font-weight: bold;
  line-height: 25px;
`;

const Main = styled.main`
  display: grid;
  grid-template-columns: 13px minmax(0, 1fr) 306px;
  flex: 1;
  border-bottom: 1px solid ${RED};
`;

const SideNav = styled.nav`
  display: flex;
  flex-direction: column;
  gap: 1px;
  padding-top: 1px;
  overflow: hidden;
`;

const SideTab = styled.button`
  display: flex;
  flex-direction: column;
  align-items: flex-end;
  justify-content: center;
  width: 12px;
  padding: 6px 4px 6px 0;
  line-height: 14px;
  background: ${(props) => ({ light: '#c8c8c8', active: '#800000', plain: '#969696' })[props.$kind]};
  color: ${(props) => (props.$kind === 'active' ? '#fff' : '#000')};
  border-bottom: ${(props) => (props.$kind === 'light' ? `1px solid ${RED}` : 0)};

  &:last-child {
    padding-bottom: 18px;
  }
`;

const ChartColumn = styled.section`
  border-left: 1px solid ${RED};
  margin-right: -1px;
`;

const PricePane = styled.div`
  position: relative;
  border-bottom: 1px solid ${RED};
`;

const ChartSvg = styled.svg`
  width: 100%;
  height: auto;
  font-size: 12px;
  shape-rendering: crispEdges;
`;

const CursorBox = styled.div`
  position: absolute;
  top: 2px;
  left: 2px;
  width: 94px;
  padding-bottom: 5px;
  background: #000;
  border: 1px solid ${RED};
  color: #c0c0c0;
  font-size: 14px;
  font-weight: bold;
`;

const Unit = styled.span`
  font-size: 16px;
  font-weight: normal;
`;

const Spread = styled.div`
  display: flex;
  justify-content: space-between;
  height: 17px;
  font-size: 16px;
  font-weight: normal;
  line-height: 16px;
`;

const CursorDate = styled.div`
  display: flex;
  justify-content: space-between;
  height: 13px;
  padding-left: 1px;
  font-size: 13px;
  line-height: 13px;
  white-space: nowrap;
`;

const CursorValue = styled.div`
  height: 18px;
  line-height: 18px;
  text-align: right;
  color: ${(props) => TONES[props.$tone]};
`;

const ChartTools = styled.div`
  position: absolute;
  top: 0;
  right: 56px;
  display: flex;
  background: #000;
  border: 1px solid ${RED};
  border-top: 0;
  border-right: 0;
  color: #c0c0c0;

  button {
    display: flex;
    align-items: center;
    height: 19px;
    padding: 0 3px;
  }
  button + button {
    border-left: 1px solid ${RED};
  }
`;

const IndicatorHead = styled.div`
  display: flex;
  gap: 4px;
  height: 17px;
  line-height: 20px;
  white-space: nowrap;
`;

const Legend = styled.span`
  color: ${(props) => props.$color};
`;

const HelpArea = styled.div`
  display: flex;
  align-items: flex-end;
  margin-left: auto;
  margin-right: 56px;
  border-right: 1px solid ${RED};
  color: #ffff00;

  button {
    height: 16px;
    padding: 0 1px;
    line-height: 14px;
    border: 1px solid #5a0032;
    border-radius: 2px;
  }
`;

const BottomTabs = styled.div`
  display: flex;
  align-items: center;
  height: 18px;
  padding-top: 1px;
`;

const SettingButton = styled.button`
  width: 33px;
  height: 16px;
  margin-right: 3px;
  background: #808080;
  border: 1px solid #bbb;
  border-right-color: #444;
  border-bottom-color: #444;
  line-height: 14px;
  color: #000;
`;

const SlantTab = styled.button`
  width: ${(props) => props.$size || '28px'};
  height: 15px;
  margin-right: -2px;
  line-height: 15px;
  background: ${(props) => (props.$active ? '#800000' : '#969696')};
  color: ${(props) => (props.$active ? '#fff' : '#111')};
  clip-path: polygon(0 0, 100% 0, calc(100% - 6px) 100%, 6px 100%);
`;

const Panel = styled.aside`
  display: flex;
  flex-direction: column;
  padding-left: 1px;
  background: #000;
`;

const StockTitle = styled.div`
  display: flex;
  align-items: center;
  height: 24px;
  padding-right: 5px;
  color: #00e6f0;
  font-family: "Liberation Serif", "Noto Sans CJK SC", serif;

  small {
    color: #ffff80;
    font-size: 11px;
    font-weight: bold;
    width: 10px;
  }
  h1 {
    flex: 1;
    margin: 0;
    font-size: 22px;
    line-height: 26px;
    font-weight: bold;
  }
`;

const Boxed = styled.div`
  border: 1px solid ${RED};
  border-right: 0;
`;

const RatioRow = styled.div`
  display: grid;
  grid-template-columns: 66px 82px 1fr;
  height: 22px;
  align-items: center;
  padding-right: 3px;
  color: #c0c0c0;
  font-size: 16px;
  line-height: 20px;

  b {
    color: ${TONES.green};
    font-size: 14px;
    text-align: right;
  }
`;

const Table = styled.table`
  width: 100%;
  border-collapse: collapse;
  table-layout: fixed;

  td, th {
    padding: 0;
  }
`;

const BookTable = styled(Table)`
  height: 107px;
  border-top: 1px solid ${RED};

  td {
    vertical-align: top;
  }
`;

const SideCell = styled.th`
  border-right: 1px solid ${RED};
  color: #c0c0c0;
  font-size: 16px;
  font-weight: normal;
  line-height: 32px;

  span {
    display: block;
  }
`;

const NumCell = styled.td`
  && {
    padding: ${(props) => (props.$left ? '0 0 0 1px' : '0 2px 0 0')};
  }
  &&:last-child {
    padding-right: 3px;
  }
  color: ${(props) => TONES[props.$tone]};
  font-size: 14px;
  font-weight: bold;
  line-height: 18px;
  text-align: ${(props) => (props.$left ? 'left' : 'right')};
  white-space: nowrap;

  ${Unit} {
    line-height: 16px;
  }
`;

const StatsTable = styled(Table)`
  border-top: 1px solid ${RED};

  tr {
    height: 18px;
  }
  td {
    height: 18px;
    line-height: 17px;
  }
`;

const LabelCell = styled.td`
  && {
    padding-left: ${(props) => (props.$indent ? '2px' : '0')};
  }
  color: #c0c0c0;
  font-size: 16px;
  white-space: nowrap;
`;

const ArrowCell = styled.td`
  && {
    padding-left: 2px;
  }
`;

const Collapse = styled.button`
  display: flex;
  align-items: center;
  justify-content: center;
  width: 100%;
  height: 11px;
`;

const IndustryRow = styled.div`
  display: flex;
  align-items: center;
  height: 20px;
  color: #c0c0c0;
  line-height: 20px;

  em {
    flex: 1;
    padding-right: 5px;
    color: ${TONES.green};
    font-family: "DejaVu Sans", sans-serif;
    font-style: normal;
    text-align: right;
  }
  button {
    width: 80px;
    height: 20px;
    background: linear-gradient(#333, #666);
    font-size: 14px;
    line-height: 18px;
  }
`;

const TickBox = styled.div`
  position: relative;
  flex: 1;
  border: 1px solid ${RED};
  border-right: 0;
`;

const TickTable = styled(Table)`
  height: 100%;
`;

const Brand = styled.div`
  position: absolute;
  right: 26px;
  bottom: -8px;
  width: 216px;
  color: #f00000;

  strong {
    display: block;
    font-size: 48px;
    font-style: italic;
    font-weight: bold;
    line-height: 56px;
    white-space: nowrap;
  }
  svg {
    width: 100%;
  }
  span {
    position: absolute;
    right: -8px;
    bottom: 9px;
    color: #b01010;
    font-size: 11px;
    font-weight: bold;
  }
`;

const PanelTabs = styled.div`
  display: flex;
  align-items: center;
  height: 18px;
  padding: 1px 0 0 5px;
`;
